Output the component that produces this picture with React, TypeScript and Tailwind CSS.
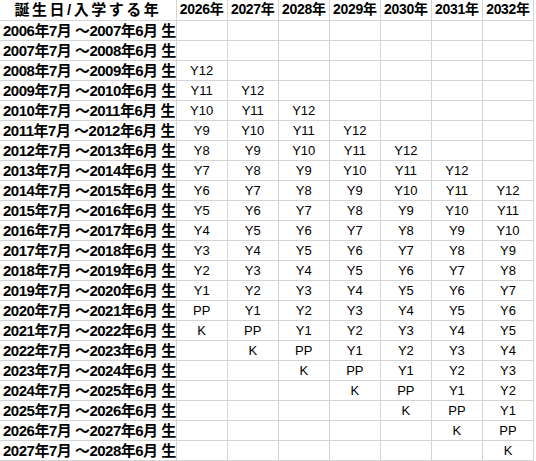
import React from "react";

const YEARS = [2026, 2027, 2028, 2029, 2030, 2031, 2032];
const BIRTH_START = Array.from({ length: 22 }, (_, i) => 2006 + i);

// grade label for someone born Jul(y) - Jun(y+1), in school year `col`
function grade(y: number, col: number): string {
  const n = col - y - 6;
  if (n > 12 || n < -1) return "";
  if (n === 0) return "PP";
  if (n === -1) return "K";
  return `Y${n}`;
}

const font = { fontFamily: '"Liberation Sans", "Noto Sans CJK JP", sans-serif' };

export default function App() {
  return (
    <div className="w-[536px] h-[461px] bg-white text-black overflow-hidden" style={font}>
      <table className="table-fixed border-collapse w-[534px]">
        <colgroup>
          <col className="w-[176px]" />
          {YEARS.map((y) => (
            <col key={y} className="w-[51px]" />
          ))}
        </colgroup>
        <thead>
          <tr className="h-[20px]">
            <th className="border border-[#d4d4d4] border-t-0 border-l-0 p-0 text-[15px] leading-[19px] font-bold tracking-[2.5px] text-center whitespace-nowrap">
              誕生日/入学する年
            </th>
            {YEARS.map((y) => (
              <th
                key={y}
                className="border border-[#d4d4d4] border-t-0 p-0 text-[14px] leading-[19px] font-bold tracking-[-0.3px] text-center whitespace-nowrap"
              >
                {y}年
              </th>
            ))}
          </tr>
        </thead>
        <tbody>
          {BIRTH_START.map((b) => (
            <tr key={b} className="h-[20px]">
              <td className="border border-[#d4d4d4] border-l-0 p-0 pl-[3px] text-[15px] leading-[19px] font-bold whitespace-nowrap tracking-[-0.5px] overflow-hidden">
                {b}年7月 ～{b + 1}年6月 生
              </td>
              {YEARS.map((y) => (
                <td
                  key={y}
                  className="border border-[#d4d4d4] p-0 text-[13px] leading-[19px] text-center"
                >
                  {grade(b, y)}
                </td>
              ))}
            </tr>
          ))}
        </tbody>
      </table>
    </div>
  );
}
